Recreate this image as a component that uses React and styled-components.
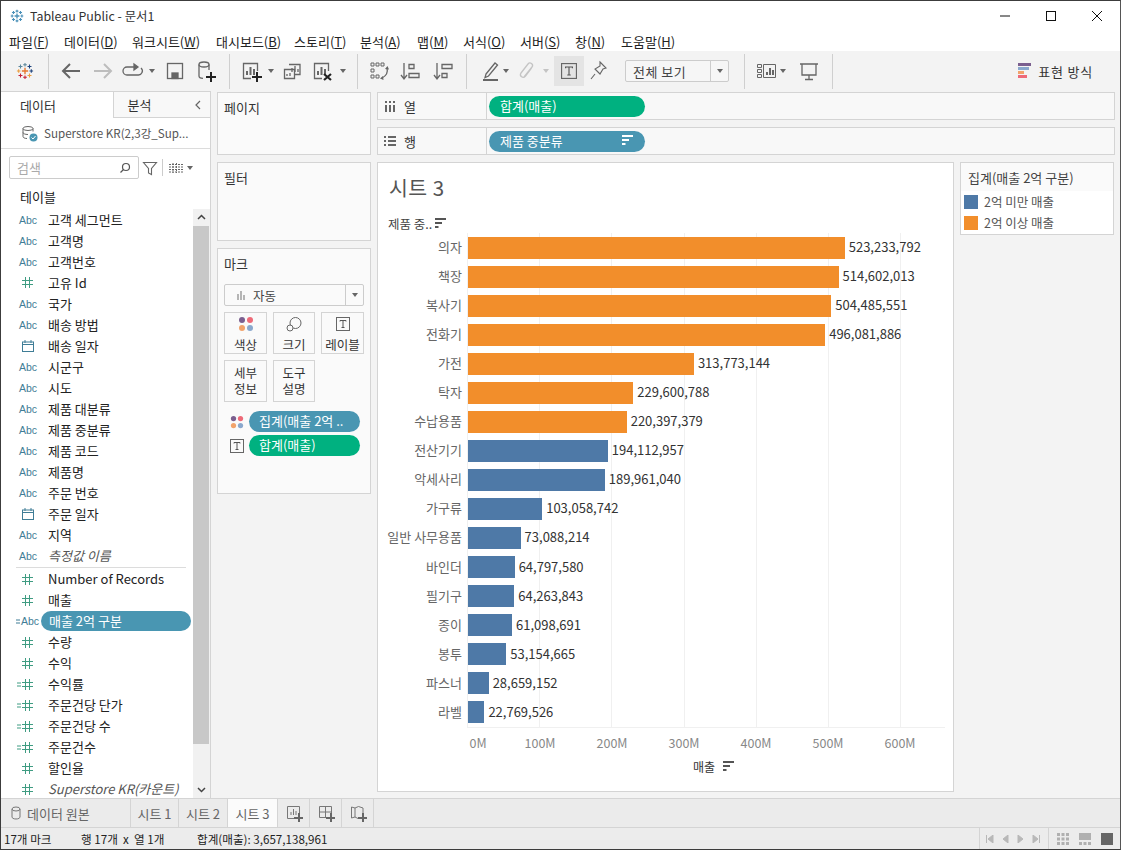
import React from "react";
import styled, { createGlobalStyle } from "styled-components";

const Global = createGlobalStyle`
  html, body { margin: 0; padding: 0; background: #fff; }
  * { box-sizing: border-box; }
`;

const FONT = `"Noto Sans CJK KR", "Noto Sans", sans-serif`;

const Win = styled.div`
  width: 1121px; height: 850px; display: flex; flex-direction: column;
  border: 1px solid #3c3c3c; border-right-color: #555; background: #f3f3f3;
  font-family: ${FONT}; font-size: 13px; color: #333; overflow: hidden;
`;
const TitleBar = styled.div`
  height: 30px; flex: none; background: #fff; display: flex; align-items: center; padding-left: 9px; gap: 6px;
  font-size: 12.4px; color: #333;
`;
const WinButtons = styled.div`margin-left: auto; display: flex;`;
const WinBtn = styled.div`width: 46px; height: 30px; display: flex; align-items: center; justify-content: center;`;
const MenuBar = styled.div`
  height: 20px; flex: none; background: #fff; display: flex; align-items: center; padding-left: 8px; color: #222; font-size: 13px;
`;
const MenuItem = styled.div`width: ${p => p.$w}px; white-space: nowrap; u { text-underline-offset: 1px; }`;
const Toolbar = styled.div`
  height: 40px; flex: none; background: #f3f3f3; display: flex; align-items: center; padding-left: 7px;
`;
const Slot = styled.div`
  width: ${p => p.$w}px; height: 30px; flex: none; margin-left: ${p => p.$ml || 0}px; display: flex; align-items: center; justify-content: center;
  color: ${p => p.$c || "#666"}; background: ${p => p.$on ? "#e4e4e4" : "transparent"};
`;
const Sep = styled.div`width: 1px; height: 35px; flex: none; background: #cfcfcf; margin-left: ${p => p.$ml}px;`;
const Caret = styled.div`
  width: 0; height: 0; border-left: 3.5px solid transparent; border-right: 3.5px solid transparent; border-top: 4px solid ${p => p.$c || "#666"};
`;
const FitBox = styled.div`
  width: 104px; height: 22px; margin-left: 15px; flex: none; display: flex; border: 1px solid #ccc; border-radius: 2px; background: #f6f6f6;
  font-size: 13px; color: #444; align-items: center;
`;
const FitText = styled.div`flex: 1; padding-left: 7px; letter-spacing: .5px;`;
const FitArrow = styled.div`width: 18px; height: 100%; border-left: 1px solid #ccc; display: flex; align-items: center; justify-content: center;`;
const ShowMe = styled.div`
  margin-left: auto; margin-right: 27px; display: flex; align-items: center; gap: 7px; font-size: 13px; color: #333; letter-spacing: .8px;
`;

const Body = styled.div`flex: 1; min-height: 0; display: flex; background: #f3f3f3;`;

const DataPanel = styled.div`width: 210px; flex: none; background: #fff; display: flex; flex-direction: column; border-right: 1px solid #d4d4d4;`;
const PaneTabs = styled.div`height: 27px; flex: none; display: flex; border-top: 1px solid #d4d4d4;`;
const PaneTab = styled.div`
  width: ${p => p.$w}px; display: flex; align-items: center; padding-left: ${p => p.$pl}px; font-size: 13px; color: #333;
  background: ${p => p.$off ? "#f8f8f8" : "#fff"};
  border-left: ${p => p.$off ? "1px solid #d4d4d4" : "none"}; border-bottom: ${p => p.$off ? "1px solid #d4d4d4" : "none"};
`;
const Collapse = styled.div`margin-left: auto; margin-right: 7px; display: flex;`;
const SourceRow = styled.div`
  height: 31px; flex: none; display: flex; align-items: center; padding-left: 20px; gap: 6px; border-bottom: 1px solid #dcdcdc; color: #555; font-size: 11.6px;
`;
const SearchRow = styled.div`height: 37px; flex: none; display: flex; align-items: center; padding-left: 8px;`;
const SearchBox = styled.div`
  width: 130px; height: 23px; border: 1px solid #ccc; border-radius: 2px; display: flex; align-items: center; justify-content: space-between; padding: 0 7px; color: #aaa; font-size: 13px;
`;
const RowSep = styled.div`width: 1px; height: 17px; background: #ccc; margin: 0 6px 0 4px;`;
const FilterSlot = styled.div`margin-left: ${p => p.$ml}px; display: flex;`;
const Tables = styled.div`height: 20px; flex: none; display: flex; align-items: center; padding-left: 19px; font-size: 13px; color: #222;`;
const ListWrap = styled.div`flex: 1; min-height: 0; display: flex; margin-top: 3px;`;
const List = styled.div`flex: 1; min-width: 0; overflow: hidden;`;
const ScrollBar = styled.div`width: 17px; flex: none; background: #f1f1f1; display: flex; flex-direction: column; padding-right: 1px;`;
const ScrollBtn = styled.div`height: 17px; flex: none; display: flex; align-items: center; justify-content: center;`;
const Thumb = styled.div`height: 518px; flex: none; background: #c8c8c8;`;
const ScrollRest = styled.div`flex: 1;`;
const FieldRow = styled.div`height: 21.04px; display: flex; align-items: center; white-space: nowrap;`;
const FieldIcon = styled.div`
  width: 39px; flex: none; display: flex; justify-content: flex-end; align-items: center; padding-right: ${p => p.$pr}px;
  font-family: "Liberation Sans", sans-serif; font-size: 10.5px; color: ${p => p.$c};
`;
const FieldName = styled.div`
  height: 20px; display: flex; align-items: center; padding: 0 0 1px 8px; margin-left: ${p => p.$on ? 1 : 0}px; font-size: 13px;
  width: ${p => p.$on ? "150px" : "auto"}; border-radius: 10px;
  background: ${p => p.$on ? "#4996b2" : "transparent"}; color: ${p => p.$on ? "#fff" : p.$it ? "#555" : "#222"};
  font-style: ${p => p.$it ? "italic" : "normal"};
`;
const FieldDivider = styled.div`height: 1px; background: #dcdcdc; margin: 0 7px 1px 15px;`;

const CardsCol = styled.div`width: 154px; flex: none; margin-left: 6px; display: flex; flex-direction: column; padding-top: 1px; gap: 7px;`;
const Card = styled.div`
  height: ${p => p.$h}px; flex: none; background: #fafafa; border: 1px solid #d4d4d4; padding: 5px 6px 0 6px; font-size: 13px; line-height: 19px; color: #333;
`;
const MarkSelect = styled.div`
  height: 22px; margin-top: 11px; border: 1px solid #ccc; border-radius: 2px; background: #fafafa; display: flex; align-items: center; color: #444; font-size: 12.5px;
`;
const MarkSelectText = styled.div`flex: 1; display: flex; align-items: center; gap: 7px; padding-left: 11px;`;
const MarkGrid = styled.div`display: grid; grid-template-columns: 43px 42px 43px; column-gap: 6px; row-gap: 6px; margin-top: 6px;`;
const MarkBtn = styled.div`
  height: 42px; border: 1px solid #d4d4d4; display: flex; flex-direction: column; align-items: center; justify-content: center; font-size: 12.5px; line-height: 16px; color: #333; text-align: center;
`;
const MarkBtnIcon = styled.div`height: 23px; flex: none; padding-bottom: 2px; display: flex; align-items: center; justify-content: center;`;
const MarkPills = styled.div`display: flex; flex-direction: column; gap: 3px; margin-top: 9px; padding-right: 4px;`;
const MarkPillRow = styled.div`display: flex; align-items: center; justify-content: flex-end; gap: 5px;`;
const Pill = styled.div`
  width: ${p => p.$w}px; height: 21px; border-radius: 11px; background: ${p => p.$c}; color: #fff; display: flex; align-items: center; padding: 0 11px 2px ${p => p.$pl || 10}px; font-size: 13px;
  white-space: nowrap; overflow: hidden; justify-content: ${p => p.$between ? "space-between" : "flex-start"};
`;

const MainCol = styled.div`width: 738px; flex: none; margin-left: 6px; padding-top: 1px; display: flex; flex-direction: column; gap: 7px;`;
const Shelf = styled.div`height: 28px; flex: none; display: flex; background: #f8f8f8; border: 1px solid #d4d4d4;`;
const ShelfLabel = styled.div`width: 109px; flex: none; border-right: 1px solid #d4d4d4; display: flex; align-items: center; gap: 8px; padding-left: 6px; font-size: 13px; color: #333;`;
const ShelfBody = styled.div`flex: 1; display: flex; align-items: center; padding-left: 2px;`;
const ContentRow = styled.div`display: flex; align-items: flex-start; gap: 6px;`;

const Viz = styled.div`width: 577px; height: 630px; flex: none; background: #fff; border: 1px solid #d4d4d4; display: flex; flex-direction: column;`;
const VizTitle = styled.div`height: 39px; flex: none; padding: 10px 0 0 11px; font-size: 20.5px; line-height: 28px; color: #555; letter-spacing: .5px;`;
const AxisHead = styled.div`height: 31px; flex: none; display: flex; align-items: center; gap: 3px; padding: 11px 0 0 10px; font-size: 12.5px; color: #444;`;
const BarRow = styled.div`height: 29.06px; flex: none; display: flex;`;
const BarLabel = styled.div`width: 89px; flex: none; padding-right: 5px; text-align: right; font-size: 13px; color: #666; line-height: 27px; white-space: nowrap;`;
const Plot = styled.div`
  width: 478px; flex: none; display: flex; align-items: center; padding-left: 1px;
  background: repeating-linear-gradient(90deg, #f0f0f0 0 1px, transparent 1px 72.2px);
`;
const Bar = styled.div`height: 22px; flex: none; background: ${p => p.$c};`;
const BarValue = styled.div`margin: 0 0 2px 4px; font-size: 13px; color: #333; white-space: nowrap;`;
const XLine = styled.div`height: 1px; flex: none; width: 478px; margin-left: 89px; background: #f0f0f0;`;
const XTicks = styled.div`height: 30px; flex: none; display: flex; margin-left: 89px; width: 478px; padding-top: 5px;`;
const XTick = styled.div`width: ${p => p.$w}px; flex: none; margin-left: ${p => p.$ml || 0}px; text-align: center; font-size: 12.5px; color: #888;`;
const XTitle = styled.div`flex: none; display: flex; justify-content: center; align-items: center; gap: 8px; font-size: 12px; color: #333; margin-left: 97px; width: 478px;`;

const Legend = styled.div`width: 154px; flex: none; background: #fff; border: 1px solid #d4d4d4; display: flex; flex-direction: column; padding-bottom: 1px;`;
const LegendTitle = styled.div`height: 28px; background: #fafafa; display: flex; align-items: center; padding-left: 7px; font-size: 13px; color: #444;`;
const LegendRow = styled.div`height: 21px; display: flex; align-items: center; gap: 6px; padding-left: 3px; font-size: 12.5px; color: #555;`;
const Swatch = styled.div`width: 14px; height: 14px; background: ${p => p.$c};`;

const TabBar = styled.div`height: 30px; flex: none; display: flex; background: #ebebeb; border-top: 1px solid #d4d4d4; border-bottom: 1px solid #d4d4d4;`;
const Tab = styled.div`
  width: ${p => p.$w}px; flex: none; display: flex; align-items: center; justify-content: ${p => p.$left ? "flex-start" : "center"}; gap: 6px; padding-left: ${p => p.$left ? 10 : 0}px;
  border-right: 1px solid #d4d4d4; font-size: 13px; color: #666; background: ${p => p.$on ? "#fbfbfb" : "transparent"};
`;
const StatusBar = styled.div`height: 21px; flex: none; display: flex; align-items: center; background: #ececec; font-size: 11.6px; color: #222; white-space: nowrap;`;
const StatusText = styled.div`width: ${p => p.$w}px; padding-left: ${p => p.$pl}px; flex: none;`;
const Pager = styled.div`margin-left: auto; height: 100%; display: flex; align-items: center; border-left: 1px solid #d4d4d4; gap: 8px; padding: 0 8px 0 6px;`;
const ViewModes = styled.div`height: 100%; display: flex; align-items: center; gap: 10px; border-left: 1px solid #d4d4d4; padding: 0 7px 0 8px;`;

const I = ({ s = 24, w, h, children, c = "currentColor", sw = 1.3 }) => (
  <svg width={w || s} height={h || s} viewBox={`0 0 ${w || s} ${h || s}`} fill="none" stroke={c} strokeWidth={sw}>{children}</svg>
);
const Plus = ({ x, y, c = "#222" }) => <path d={`M${x - 5} ${y}h10M${x} ${y - 5}v10`} stroke={c} strokeWidth="2" />;

const Tableau = ({ s = 20, colors, k = 1.2 }) => {
  const cr = (x, y, r, col, sw = k) => <path key={`${x}-${y}`} d={`M${x - r} ${y}h${2 * r}M${x} ${y - r}v${2 * r}`} stroke={col} strokeWidth={sw} />;
  const [a, b, c, d, e] = colors;
  return (
    <svg width={s} height={s} viewBox="0 0 20 20" fill="none">
      {cr(10, 10, 3.5, a, k + 0.3)}
      {cr(10, 3, 2, b)}{cr(10, 17, 2, c)}{cr(3, 10, 2, d)}{cr(17, 10, 2, e)}
      {cr(5, 5, 2.2, b)}{cr(15, 5, 2.2, e)}{cr(5, 15, 2.2, c)}{cr(15, 15, 2.2, d)}
    </svg>
  );
};

const Dots = ({ s = 16 }) => (
  <svg width={s} height={s} viewBox="0 0 16 16">
    <circle cx="4" cy="4" r="3" fill="#7b5f8f" /><circle cx="12" cy="4" r="3" fill="#ee6a78" />
    <circle cx="4" cy="12" r="3" fill="#f2a36b" /><circle cx="12" cy="12" r="3" fill="#8aa8cd" />
  </svg>
);
const TBox = ({ s = 14 }) => (
  <svg width={s} height={s} viewBox="0 0 14 14" fill="none">
    <rect x=".5" y=".5" width="13" height="13" stroke="#666" />
    <path d="M4 4.500V3.500H10V4.500M7 3.500V10.500M5.500 10.500H8.500" stroke="#555" />
  </svg>
);
const Sort = ({ c = "#555" }) => (
  <svg width="12" height="10" viewBox="0 0 12 10"><path d="M0 1h11M0 5h7M0 9h3.500" stroke={c} strokeWidth="2" /></svg>
);
const Hash = ({ c = "#3f9c82" }) => (
  <svg width="11" height="11" viewBox="0 0 11 11"><path d="M3.500 0v11M7.500 0v11M0 3.500h11M0 7.500h11" stroke={c} strokeWidth="1" /></svg>
);
const Cal = () => (
  <svg width="12" height="12" viewBox="0 0 12 12" fill="none" stroke="#3f7d96"><rect x=".5" y="2" width="11" height="9.500" /><path d="M.5 4.500h11M3 0v3M9 0v3" /></svg>
);
const EqWrap = styled.span`display: flex; margin-right: 1px;`;
const Eq = ({ c }) => <EqWrap><svg width="4" height="5" viewBox="0 0 4 5"><path d="M0 1h4M0 4h4" stroke={c} /></svg></EqWrap>;

const FIELDS1 = [
  ["a", "고객 세그먼트"], ["a", "고객명"], ["a", "고객번호"], ["n", "고유 Id", 1], ["a", "국가"], ["a", "배송 방법"], ["d", "배송 일자"],
  ["a", "시군구"], ["a", "시도"], ["a", "제품 대분류"], ["a", "제품 중분류"], ["a", "제품 코드"], ["a", "제품명"], ["a", "주문 번호"], ["d", "주문 일자"], ["a", "지역"],
];
const FIELDS2 = [
  ["n", "Number of Records"], ["n", "매출"], ["ca", "매출 2억 구분", 0, 1], ["n", "수량"], ["n", "수익"], ["cn", "수익률"], ["cn", "주문건당 단가"], ["cn", "주문건당 수"], ["cn", "주문건수"], ["n", "할인율"], ["n", "Superstore KR(카운트)", 0, 0, 1],
];
const BLUE = "#4e79a7", ORANGE = "#f28e2b";
const BARS = [
  ["의자", 523233792, 1], ["책장", 514602013, 1], ["복사기", 504485551, 1], ["전화기", 496081886, 1], ["가전", 313773144, 1], ["탁자", 229600788, 1], ["수납용품", 220397379, 1],
  ["전산기기", 194112957], ["악세사리", 189961040], ["가구류", 103058742], ["일반 사무용품", 73088214], ["바인더", 64797580], ["필기구", 64263843], ["종이", 61098691], ["봉투", 53154665], ["파스너", 28659152], ["라벨", 22769526],
];

const FieldIconCell = ({ t }) => {
  if (t === "a") return <FieldIcon $c="#3f7d96" $pr={3}>Abc</FieldIcon>;
  if (t === "n") return <FieldIcon $c="#3f9c82" $pr={7}><Hash /></FieldIcon>;
  if (t === "d") return <FieldIcon $c="#3f7d96" $pr={6}><Cal /></FieldIcon>;
  if (t === "ca") return <FieldIcon $c="#3f7d96" $pr={1}><Eq c="#3f7d96" />Abc</FieldIcon>;
  return <FieldIcon $c="#3f9c82" $pr={7}><Eq c="#3f9c82" /><Hash /></FieldIcon>;
};
const Field = ({ f }) => (
  <FieldRow>
    <FieldIconCell t={f[0]} />
    <FieldName $on={f[3]} $it={f[4]}>{f[1]}</FieldName>
  </FieldRow>
);

const Menu = [["파일", "F", 55], ["데이터", "D", 68], ["워크시트", "W", 84], ["대시보드", "B", 78], ["스토리", "T", 66], ["분석", "A", 57], ["맵", "M", 46], ["서식", "O", 57], ["서버", "S", 55], ["창", "N", 46], ["도움말", "H", 60]];

export default function App() {
  return (
    <Win>
      <Global />
      <TitleBar>
        <Tableau s={14} k={1.6} colors={["#4a90b8", "#4a90b8", "#4a90b8", "#4a90b8", "#4a90b8"]} />
        <span>Tableau Public - 문서1</span>
        <WinButtons>
          <WinBtn><I s={12} c="#111" sw={1}><path d="M1 6h10" /></I></WinBtn>
          <WinBtn><I s={12} c="#111" sw={1}><rect x="1.500" y="1.500" width="9" height="9" /></I></WinBtn>
          <WinBtn><I s={12} c="#111" sw={1}><path d="M1 1l10 10M11 1L1 11" /></I></WinBtn>
        </WinButtons>
      </TitleBar>
      <MenuBar>
        {Menu.map(([n, k, w]) => <MenuItem key={k} $w={w}>{n}(<u>{k}</u>)</MenuItem>)}
      </MenuBar>
      <Toolbar>
        <Slot $w={34}><Tableau s={18} colors={["#e8762c", "#5b879b", "#c72035", "#eb9d3f", "#1f447d"]} /></Slot>
        <Sep $ml={6} />
        <Slot $w={28} $ml={8}><I><path d="M21 12H4M11 5l-7 7 7 7" strokeWidth="2" /></I></Slot>
        <Slot $w={28} $ml={4} $c="#bdbdbd"><I><path d="M3 12h17M13 5l7 7-7 7" strokeWidth="2" /></I></Slot>
        <Slot $w={28} $ml={1}><I><path d="M15 8H7a4 4 0 0 0 0 8h11a4 4 0 0 0 3-7" /><path d="M14 5l4 3-4 3z" fill="#666" /></I></Slot>
        <Slot $w={10} $ml={1}><Caret /></Slot>
        <Slot $w={26} $ml={5}><I><rect x="4.500" y="4.500" width="15" height="15" /><rect x="9" y="14" width="6" height="5.500" fill="#666" /></I></Slot>
        <Slot $w={26} $ml={5}><I><ellipse cx="10" cy="5.500" rx="5" ry="2.500" /><path d="M5 5.500V17c0 1.500 2 2.300 4 2.400M15 5.500V11" /><Plus x={17} y={18} /></I></Slot>
        <Sep $ml={10} />
        <Slot $w={26} $ml={8}><I><path d="M12 19.500H4.500v-15h14V12" /><path d="M8 16v-4M11.500 16V8M15 16v-6" strokeWidth="2" /><Plus x={18} y={18} /></I></Slot>
        <Slot $w={10} $ml={2}><Caret /></Slot>
        <Slot $w={26} $ml={3}><I><path d="M9 5.500h11v10H15M4.500 10.500h10v9h-10z" /><path d="M12 13v-4M15 13V7M18 13v-3M7 17v-2M10 17v-3" /></I></Slot>
        <Slot $w={26} $ml={4}><I><path d="M12 19.500H4.500v-15h14V12" /><path d="M8 16v-4M11.500 16V8M15 16v-6" strokeWidth="2" /><path d="M14 15l7 6M21 15l-7 6" stroke="#222" strokeWidth="2.200" /></I></Slot>
        <Slot $w={10} $ml={3}><Caret /></Slot>
        <Sep $ml={9} />
        <Slot $w={26} $ml={8}><I><path d="M4 4h3v3H4zM9 4h3v3H9zM14 4h3v3h-3zM4 10h3v3H4zM4 16h3v3H4zM9 16h3v3H9z" strokeWidth="1" /><path d="M20 9c1 4-1 8-5 10" /><path d="M18 10l2.500-3 1.500 3.500zM16 17l-3 2.500 3.500 1.500z" fill="#666" stroke="none" /></I></Slot>
        <Slot $w={26} $ml={5}><I><path d="M6 4v15M3 16l3 4 3-4" /><path d="M11 5.500h5v4h-5zM11 14.500h10v4H11z" /></I></Slot>
        <Slot $w={26} $ml={7}><I><path d="M6 4v15M3 16l3 4 3-4" /><path d="M11 5.500h10v4H11zM11 14.500h5v4h-5z" /></I></Slot>
        <Sep $ml={10} />
        <Slot $w={24} $ml={11}><I><path d="M8 15l9-11 2.500 2-9 11-3.500 1.500z" /><path d="M5 21h15" strokeWidth="2" /></I></Slot>
        <Slot $w={8}><Caret /></Slot>
        <Slot $w={26} $ml={4} $c="#c4c4c4"><I><path d="M9 18l8-10a2.500 2.500 0 0 0-4-3L6 14c-2 3 2 6 4.500 3l6-8" /></I></Slot>
        <Slot $w={8} $ml={2}><Caret $c="#c4c4c4" /></Slot>
        <Slot $w={30} $ml={4} $on><TBox s={16} /></Slot>
        <Slot $w={24} $ml={2}><I sw={1.1}><path d="M14 3l6 6-3 1-3 5-5-5 5-3zM9 15l-4 5" /></I></Slot>
        <FitBox><FitText>전체 보기</FitText><FitArrow><Caret /></FitArrow></FitBox>
        <Sep $ml={15} />
        <Slot $w={24} $ml={10}><I><path d="M2.500 5.500h4v3h-4zM2.500 10.500h4v3h-4zM2.500 15.500h4v3h-4zM8.500 5.500h12v13h-12z" strokeWidth="1" /><path d="M12 16v-3M15 16V9M18 16v-5" strokeWidth="2" /></I></Slot>
        <Slot $w={8}><Caret /></Slot>
        <Slot $w={26} $ml={9}><I><path d="M3 5h18M5 5v11h14V5M12 16v4M8 20.500h8" /></I></Slot>
        <Sep $ml={10} />
        <ShowMe>
          <svg width="13" height="16" viewBox="0 0 13 16"><rect width="13" height="3" fill="#7b5f8f" /><rect y="4" width="11" height="3" fill="#8aa8cd" /><rect y="8" width="6" height="3" fill="#f2a36b" /><rect y="12" width="9" height="3" fill="#ee6a78" /></svg>
          표현 방식
        </ShowMe>
      </Toolbar>
      <Body>
        <DataPanel>
          <PaneTabs>
            <PaneTab $w={113} $pl={19}>데이터</PaneTab>
            <PaneTab $w={97} $pl={13} $off>분석<Collapse><I s={10} c="#666" sw={1.2}><path d="M7 1L3 5l4 4" /></I></Collapse></PaneTab>
          </PaneTabs>
          <SourceRow>
            <svg width="17" height="17" viewBox="0 0 17 17" fill="none" stroke="#666"><ellipse cx="7" cy="3.500" rx="5" ry="2" /><path d="M2 3.500v8c0 1 1.500 2 4 2M12 3.500v3M2 7.500c0 1 2 2 5 2" /><circle cx="12.500" cy="12.500" r="4" fill="#4996b2" stroke="none" /><path d="M10.500 12.500l1.500 1.500 2.500-3" stroke="#fff" /></svg>
            <span>Superstore KR(2,3강_Sup...</span>
          </SourceRow>
          <SearchRow>
            <SearchBox>검색<I s={12} c="#555" sw={1.2}><circle cx="7" cy="5" r="3.500" /><path d="M4.500 7.500L1.500 10.500" /></I></SearchBox>
            <FilterSlot $ml={3}><I s={16} c="#666" sw={1.1}><path d="M1.500 2.500h13L9.500 8.500v6l-3-1.500V8.500z" /></I></FilterSlot>
            <RowSep />
            <I w={14} h={10} c="#666" sw={1}><path d="M0 1.500h14M0 4h14M0 6.500h14M0 9h14M4 0v10M7.500 0v10" strokeDasharray="2 1" /></I>
            <FilterSlot $ml={4}><Caret /></FilterSlot>
          </SearchRow>
          <Tables>테이블</Tables>
          <ListWrap>
            <List>
              {FIELDS1.map(f => <Field key={f[1]} f={f} />)}
              <FieldRow><FieldIcon $c="#3f7d96" $pr={3}>Abc</FieldIcon><FieldName $it>측정값 이름</FieldName></FieldRow>
              <FieldDivider />
              {FIELDS2.map(f => <Field key={f[1]} f={f} />)}
            </List>
            <ScrollBar>
              <ScrollBtn><I s={9} c="#444" sw={1.5}><path d="M1 6l3.500-3.500L8 6" /></I></ScrollBtn>
              <Thumb />
              <ScrollRest />
              <ScrollBtn><I s={9} c="#444" sw={1.5}><path d="M1 3l3.500 3.500L8 3" /></I></ScrollBtn>
            </ScrollBar>
          </ListWrap>
        </DataPanel>
        <CardsCol>
          <Card $h={63}>페이지</Card>
          <Card $h={79}>필터</Card>
          <Card $h={246}>
            마크
            <MarkSelect>
              <MarkSelectText>
                <svg width="10" height="10" viewBox="0 0 10 10"><path d="M1 4h2v6H1zM4 1h2v9H4zM7 5h2v5H7z" fill="#b5b5b5" /></svg>
                자동
              </MarkSelectText>
              <FitArrow><Caret /></FitArrow>
            </MarkSelect>
            <MarkGrid>
              <MarkBtn><MarkBtnIcon><Dots /></MarkBtnIcon>색상</MarkBtn>
              <MarkBtn><MarkBtnIcon><I s={16} c="#666" sw={1}><circle cx="9.500" cy="7" r="5.500" /><circle cx="4" cy="12" r="3" fill="#fafafa" /></I></MarkBtnIcon>크기</MarkBtn>
              <MarkBtn><MarkBtnIcon><TBox /></MarkBtnIcon>레이블</MarkBtn>
              <MarkBtn>세부<br />정보</MarkBtn>
              <MarkBtn>도구<br />설명</MarkBtn>
            </MarkGrid>
            <MarkPills>
              <MarkPillRow><Dots s={14} /><Pill $w={111} $c="#4996b2">집계(매출 2억 ..</Pill></MarkPillRow>
              <MarkPillRow><TBox /><Pill $w={111} $c="#00b180">합계(매출)</Pill></MarkPillRow>
            </MarkPills>
          </Card>
        </CardsCol>
        <MainCol>
          <Shelf>
            <ShelfLabel>
              <I s={12} c="#666" sw={2}><path d="M2 5v7M6 5v7M10 5v7" /><path d="M2 1v2M6 1v2M10 1v2" /></I>
              열
            </ShelfLabel>
            <ShelfBody><Pill $w={156} $c="#00b180" $pl={11}>합계(매출)</Pill></ShelfBody>
          </Shelf>
          <Shelf>
            <ShelfLabel>
              <I s={12} c="#666" sw={2}><path d="M0 2h2M4 2h8M0 6h2M4 6h8M0 10h2M4 10h8" /></I>
              행
            </ShelfLabel>
            <ShelfBody><Pill $w={156} $c="#4996b2" $pl={11} $between>제품 중분류<Sort c="#fff" /></Pill></ShelfBody>
          </Shelf>
          <ContentRow>
            <Viz>
              <VizTitle>시트 3</VizTitle>
              <AxisHead>제품 중..<Sort /></AxisHead>
              {BARS.map(([n, v, o]) => (
                <BarRow key={n}>
                  <BarLabel>{n}</BarLabel>
                  <Plot>
                    <Bar $c={o ? ORANGE : BLUE} style={{ width: (v / 1e6) * 0.72 }} />
                    <BarValue>{v.toLocaleString("en-US")}</BarValue>
                  </Plot>
                </BarRow>
              ))}
              <XLine />
              <XTicks>
                <XTick $w={22}>0M</XTick>
                <XTick $w={72} $ml={15}>100M</XTick>
                <XTick $w={72}>200M</XTick>
                <XTick $w={72}>300M</XTick>
                <XTick $w={72}>400M</XTick>
                <XTick $w={72}>500M</XTick>
                <XTick $w={72}>600M</XTick>
              </XTicks>
              <XTitle>매출<Sort /></XTitle>
            </Viz>
            <Legend>
              <LegendTitle>집계(매출 2억 구분)</LegendTitle>
              <LegendRow><Swatch $c={BLUE} />2억 미만 매출</LegendRow>
              <LegendRow><Swatch $c={ORANGE} />2억 이상 매출</LegendRow>
            </Legend>
          </ContentRow>
        </MainCol>
      </Body>
      <TabBar>
        <Tab $w={130} $left>
          <I w={10} h={14} c="#777" sw={1}><ellipse cx="5" cy="3" rx="4" ry="2" /><path d="M1 3v8c0 1 1.500 2 4 2s4-1 4-2V3" /></I>
          데이터 원본
        </Tab>
        <Tab $w={48}>시트 1</Tab>
        <Tab $w={49}>시트 2</Tab>
        <Tab $w={50} $on>시트 3</Tab>
        <Tab $w={32}><I s={18} c="#777" sw={1}><path d="M9 14.500H2.500v-12h12V9" /><path d="M6 11V8M8.500 11V5M11 11V7" /><Plus x={14} y={14} c="#666" /></I></Tab>
        <Tab $w={32}><I s={18} c="#777" sw={1}><path d="M9 13.500H2.500v-11h12V9M2.500 8h12M8.500 2.500v11" /><Plus x={14} y={14} c="#666" /></I></Tab>
        <Tab $w={32}><I s={18} c="#777" sw={1}><path d="M9 14.500L6 13l-3.500 1V3l3.500 1 3.500-1.500L14 4v5M6 4v9" /><Plus x={14} y={14} c="#666" /></I></Tab>
      </TabBar>
      <StatusBar>
        <StatusText $w={80} $pl={3}>17개 마크</StatusText>
        <StatusText $w={116} $pl={0}>행 17개 &nbsp;x&nbsp; 열 1개</StatusText>
        <StatusText $w={200} $pl={0}>합계(매출): 3,657,138,961</StatusText>
        <Pager>
          <I w={8} h={8} c="#b8b8b8" sw={1}><path d="M.5 0v8M7 0v8L2 4z" fill="#b8b8b8" /></I>
          <I w={7} h={8} c="#b8b8b8" sw={1}><path d="M6 0v8L1 4z" fill="#b8b8b8" /></I>
          <I w={7} h={8} c="#b8b8b8" sw={1}><path d="M1 0v8l5-4z" fill="#b8b8b8" /></I>
          <I w={8} h={8} c="#b8b8b8" sw={1}><path d="M7.500 0v8M1 0v8l5-4z" fill="#b8b8b8" /></I>
        </Pager>
        <ViewModes>
          <svg width="12" height="12" viewBox="0 0 12 12" fill="#b0b0b0"><path d="M0 0h3v3H0zM4.500 0h3v3h-3zM9 0h3v3H9zM0 4.500h3v3H0zM4.500 4.500h3v3h-3zM9 4.500h3v3H9zM0 9h3v3H0zM4.500 9h3v3h-3zM9 9h3v3H9z" /></svg>
          <svg width="12" height="12" viewBox="0 0 12 12" fill="#b0b0b0"><path d="M0 0h12v7H0zM0 9h3v3H0zM4.500 9h3v3h-3zM9 9h3v3H9z" /></svg>
          <svg width="12" height="12" viewBox="0 0 12 12" fill="#666"><path d="M0 0h12v12H0z" /></svg>
        </ViewModes>
      </StatusBar>
    </Win>
  );
}
